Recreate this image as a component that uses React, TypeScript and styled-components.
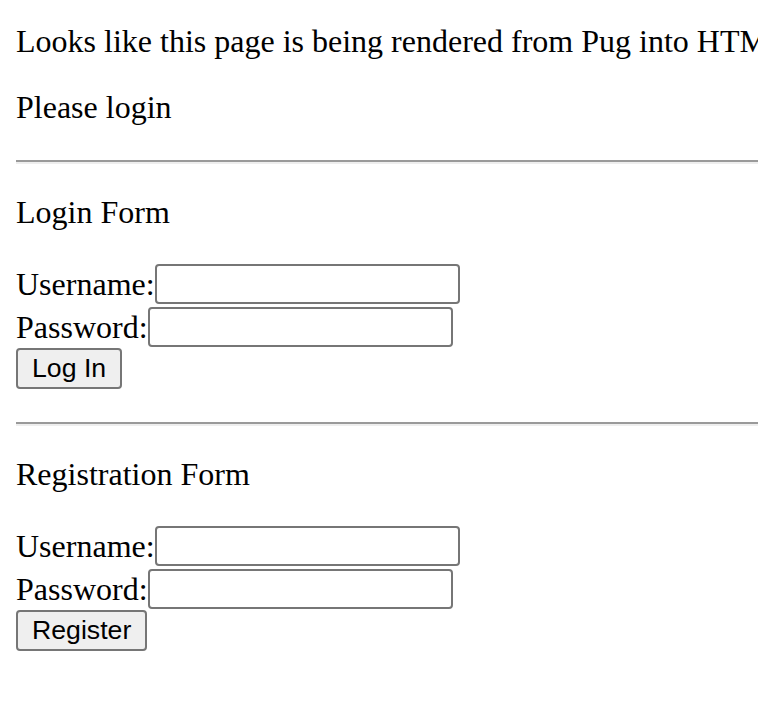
import React from "react";
import styled, { createGlobalStyle } from "styled-components";

const GlobalStyle = createGlobalStyle`
  html, body {
    margin: 0;
    padding: 0;
    background: #ffffff;
    overflow: hidden;
  }
  body {
    font-family: "Liberation Serif", "Times New Roman", serif;
    color: #000000;
  }
`;

const Page = styled.div`
  display: flex;
  flex-direction: column;
  padding: 24px 16px 0;
  width: 1200px;
`;

const Intro = styled.div`
  display: flex;
  flex-direction: column;
  gap: 32px;
  padding-bottom: 3px;
`;

const Text = styled.p`
  margin: 0;
  font-size: 32px;
  line-height: 34px;
  white-space: nowrap;
`;

const Section = styled.section`
  display: flex;
  flex-direction: column;
`;

const Rule = styled.hr`
  margin: 33px 0 0;
  width: 100%;
  height: 0;
  border: none;
  border-top: 2px solid #9a9a9a;
  border-bottom: 2px solid #eeeeee;
`;

const Heading = styled(Text)`
  margin-top: 31px;
`;

const Form = styled.form`
  display: flex;
  flex-direction: column;
  margin-top: 32px;
`;

const FieldRow = styled.div`
  display: flex;
  align-items: flex-start;
  height: 43px;
  padding-top: 3px;
  box-sizing: border-box;
`;

const Label = styled.label`
  font-size: 32px;
  line-height: 40px;
  white-space: nowrap;
`;

const Field = styled.input`
  box-sizing: border-box;
  width: 305px;
  height: 40px;
  margin: 0;
  padding: 2px 4px;
  border: 2px solid #767676;
  border-radius: 4px;
  background: #ffffff;
  font-family: "Liberation Sans", Arial, sans-serif;
  font-size: 26px;
  outline: none;
`;

const ButtonRow = styled.div`
  display: flex;
  margin-top: 1px;
`;

const Button = styled.button`
  box-sizing: border-box;
  height: 41px;
  margin: 0;
  padding: 0 14px;
  border: 2px solid #767676;
  border-radius: 4px;
  background: #efefef;
  color: #000000;
  font-family: "Liberation Sans", Arial, Helvetica, sans-serif;
  font-size: 26.67px;
  line-height: 1;
  cursor: default;
`;

type AuthFormProps = {
  title: string;
  action: string;
};

function AuthForm({ title, action }: AuthFormProps) {
  return (
    <Section>
      <Rule />
      <Heading>{title}</Heading>
      <Form onSubmit={(e) => e.preventDefault()}>
        <FieldRow>
          <Label>Username:</Label>
          <Field type="text" />
        </FieldRow>
        <FieldRow>
          <Label>Password:</Label>
          <Field type="password" />
        </FieldRow>
        <ButtonRow>
          <Button type="submit">{action}</Button>
        </ButtonRow>
      </Form>
    </Section>
  );
}

export default function App() {
  return (
    <>
      <GlobalStyle />
      <Page>
        <Intro>
          <Text>Looks like this page is being rendered from Pug into HTML</Text>
          <Text>Please login</Text>
        </Intro>
        <AuthForm title="Login Form" action="Log In" />
        <AuthForm title="Registration Form" action="Register" />
      </Page>
    </>
  );
}
